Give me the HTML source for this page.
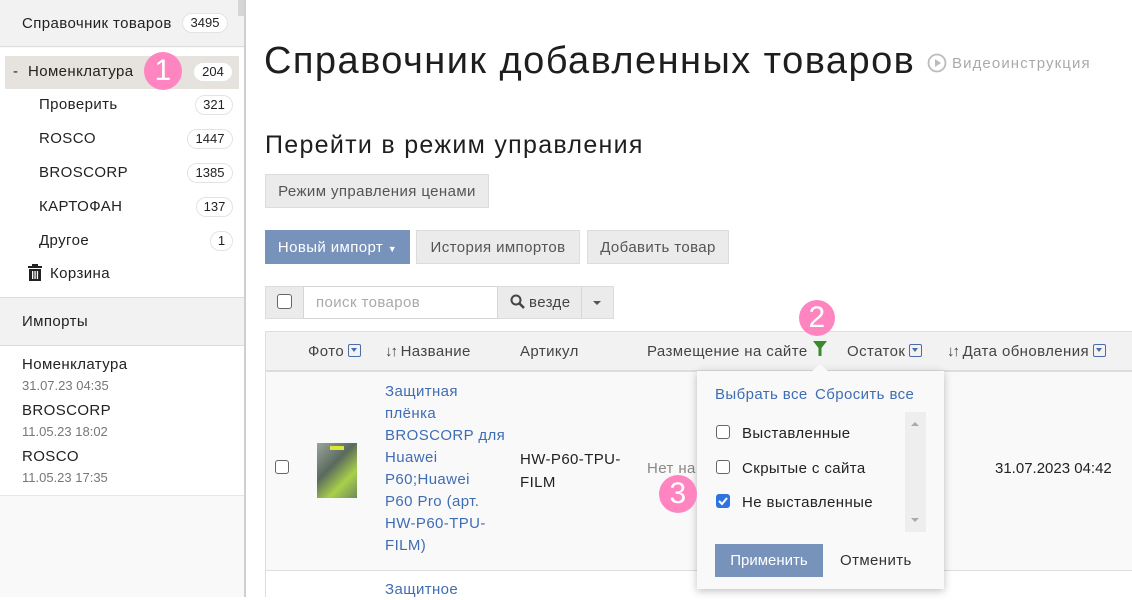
<!DOCTYPE html>
<html><head><meta charset="utf-8"><style>
*{box-sizing:border-box;margin:0;padding:0}
body{width:1132px;height:597px;overflow:hidden;background:#fff;font-family:"Liberation Sans",sans-serif;color:#222;position:relative;font-size:15px;letter-spacing:0.4px}
.a{position:absolute;white-space:nowrap;line-height:21px}
.badge{position:absolute;height:20px;border:1px solid #e3e3e3;border-radius:10px;background:#fff;font-size:13px;line-height:18px;text-align:center;color:#222;letter-spacing:0}
.pink{position:absolute;border-radius:50%;background:#ff85c0;color:#fff;text-align:center;font-size:30px}
.btn{position:absolute;background:#ebebeb;border:1px solid #dcdcdc;color:#555;font-size:15px;text-align:center}
.cb{position:absolute;width:14px;height:14px;border:1.5px solid #666;border-radius:3px;background:#fff}
.lnk{color:#3f6db3}
.sic{display:inline-block;width:13px;height:13px;border:1.5px solid #4a6da8;border-radius:2px;vertical-align:-1px;position:relative;margin-left:4px}
.sic:after{content:"";position:absolute;left:2px;top:3px;border-left:3px solid transparent;border-right:3px solid transparent;border-top:4px solid #4a6da8}
</style></head><body>
<!-- sidebar -->
<div class="a" style="left:0;top:0;width:246px;height:597px;background:#f9f9f9;border-right:2px solid #cfcfcf"></div>
<div class="a" style="left:0;top:0;width:244px;height:47px;background:#f2f2f2;border-bottom:1px solid #ddd"></div>
<div class="a" style="left:238px;top:0;width:6px;height:16px;background:#d6d6d6"></div>
<div class="a" style="left:22px;top:13px">Справочник товаров</div>
<div class="badge" style="left:182px;top:13px;width:46px">3495</div>
<div class="a" style="left:0;top:48px;width:244px;height:249px;background:#fff"></div>
<div class="a" style="left:5px;top:56px;width:234px;height:33px;background:#e6e3de"></div>
<div class="a" style="left:13px;top:61px">-</div>
<div class="a" style="left:28px;top:61px">Номенклатура</div>
<div class="badge" style="left:193px;top:62px;width:40px">204</div>
<div class="pink" style="left:144px;top:52px;width:38px;height:38px;line-height:38px">1</div>
<div class="a" style="left:39px;top:94px">Проверить</div><div class="badge" style="left:195px;top:95px;width:38px">321</div>
<div class="a" style="left:39px;top:128px">ROSCO</div><div class="badge" style="left:187px;top:129px;width:46px">1447</div>
<div class="a" style="left:39px;top:162px">BROSCORP</div><div class="badge" style="left:187px;top:163px;width:46px">1385</div>
<div class="a" style="left:39px;top:196px">КАРТОФАН</div><div class="badge" style="left:196px;top:197px;width:37px">137</div>
<div class="a" style="left:39px;top:230px">Другое</div><div class="badge" style="left:210px;top:231px;width:23px">1</div>
<svg class="a" style="left:28px;top:264px" width="14" height="17" viewBox="0 0 14 17"><rect x="0" y="2" width="14" height="2" fill="#222"/><rect x="4" y="0" width="6" height="2" fill="#222"/><rect x="1" y="5" width="12" height="12" fill="#222"/><rect x="4" y="7" width="1.3" height="8" fill="#fff"/><rect x="6.4" y="7" width="1.3" height="8" fill="#fff"/><rect x="8.8" y="7" width="1.3" height="8" fill="#fff"/></svg>
<div class="a" style="left:50px;top:263px">Корзина</div>
<div class="a" style="left:0;top:297px;width:244px;height:49px;background:#f2f2f2;border-top:1px solid #ddd;border-bottom:1px solid #ddd"></div>
<div class="a" style="left:22px;top:311px">Импорты</div>
<div class="a" style="left:0;top:346px;width:244px;height:150px;background:#fff;border-bottom:1px solid #e6e6e6"></div>
<div class="a" style="left:22px;top:354px">Номенклатура</div>
<div class="a" style="left:22px;top:375px;font-size:13px;color:#777;letter-spacing:0">31.07.23 04:35</div>
<div class="a" style="left:22px;top:400px">BROSCORP</div>
<div class="a" style="left:22px;top:421px;font-size:13px;color:#777;letter-spacing:0">11.05.23 18:02</div>
<div class="a" style="left:22px;top:446px">ROSCO</div>
<div class="a" style="left:22px;top:467px;font-size:13px;color:#777;letter-spacing:0">11.05.23 17:35</div>
<!-- main -->
<div class="a" style="left:264px;top:40px;font-size:38px;line-height:normal;letter-spacing:1.45px;color:#1e1e1e">Справочник добавленных товаров</div>
<svg class="a" style="left:927px;top:53px" width="20" height="20"><circle cx="10" cy="10" r="8.5" fill="none" stroke="#bbb" stroke-width="1.8"/><path d="M8 6 L14 10 L8 14Z" fill="#bbb"/></svg>
<div class="a" style="left:952px;top:53px;color:#aaa;font-size:15px;letter-spacing:1.1px">Видеоинструкция</div>
<div class="a" style="left:265px;top:131px;font-size:25px;line-height:normal;letter-spacing:1.3px;color:#1e1e1e">Перейти в режим управления</div>
<div class="btn" style="left:265px;top:174px;width:224px;height:34px;line-height:33px">Режим управления ценами</div>
<div class="btn" style="left:265px;top:230px;width:145px;height:34px;line-height:33px;background:#7792bb;border-color:#7792bb;color:#fff">Новый импорт <span style="font-size:9px">▼</span></div>
<div class="btn" style="left:416px;top:230px;width:164px;height:34px;line-height:33px">История импортов</div>
<div class="btn" style="left:587px;top:230px;width:142px;height:34px;line-height:33px">Добавить товар</div>
<div class="btn" style="left:265px;top:286px;width:349px;height:33px"></div>
<div class="cb" style="left:277px;top:294px;width:15px;height:15px"></div>
<div class="a" style="left:303px;top:286px;width:195px;height:33px;background:#fff;border:1px solid #d6d6d6;color:#aaa;padding:5px 0 0 12px">поиск товаров</div>
<svg class="a" style="left:510px;top:294px" width="15" height="15"><circle cx="6" cy="6" r="4.5" fill="none" stroke="#444" stroke-width="2"/><path d="M9.5 9.5 L14 14" stroke="#444" stroke-width="2.5"/></svg>
<div class="a" style="left:529px;top:292px;color:#444">везде</div>
<div class="a" style="left:581px;top:287px;width:1px;height:31px;background:#d6d6d6"></div>
<div class="a" style="left:593px;top:301px;border-left:4px solid transparent;border-right:4px solid transparent;border-top:4px solid #555"></div>
<!-- table -->
<div class="a" style="left:265px;top:331px;width:867px;height:41px;background:#f2f2f2;border-top:1px solid #ddd;border-bottom:2px solid #ddd;border-left:1px solid #ddd"></div>
<div class="a" style="left:308px;top:341px;color:#444">Фото<span class="sic"></span></div>
<div class="a" style="left:385px;top:341px;color:#444"><b style="letter-spacing:-2px">↓↑</b> Название</div>
<div class="a" style="left:520px;top:341px;color:#444">Артикул</div>
<div class="a" style="left:647px;top:341px;color:#444">Размещение на сайте</div>
<svg class="a" style="left:813px;top:341px" width="14" height="15"><path d="M0 0 H14 L8.5 7 V15 H5.5 V7Z" fill="#3b8a2a"/></svg>
<div class="a" style="left:847px;top:341px;color:#444">Остаток<span class="sic"></span></div>
<div class="a" style="left:947px;top:341px;color:#444"><b style="letter-spacing:-2px">↓↑</b> Дата обновления<span class="sic"></span></div>
<div class="a" style="left:265px;top:372px;width:867px;height:199px;background:#f9f9f9;border-left:1px solid #ddd;border-bottom:1px solid #ddd"></div>
<div class="a" style="left:265px;top:571px;width:1px;height:26px;background:#ddd"></div>
<div class="cb" style="left:275px;top:460px"></div>
<div class="a" style="left:317px;top:443px;width:40px;height:55px;background:linear-gradient(135deg,#9aa59d,#5a6a5e 40%,#a8d04a 70%,#6f8a5a)"></div>
<div class="a" style="left:330px;top:446px;width:14px;height:4px;background:#d8e83a"></div>
<div class="a lnk" style="left:385px;top:381px;line-height:22px;white-space:normal;width:125px">Защитная<br>плёнка<br>BROSCORP для<br>Huawei<br>P60;Huawei<br>P60 Pro (арт.<br>HW-P60-TPU-<br>FILM)</div>
<div class="a" style="left:520px;top:448px;line-height:23px">HW-P60-TPU-<br>FILM</div>
<div class="a" style="left:647px;top:458px;color:#888">Нет на</div>
<div class="a" style="left:995px;top:458px;letter-spacing:0">31.07.2023 04:42</div>
<div class="a lnk" style="left:385px;top:579px">Защитное</div>
<!-- dropdown -->
<div class="a" style="left:697px;top:371px;width:247px;height:218px;background:#f9f9f9;box-shadow:0 2px 8px rgba(0,0,0,.25)"></div>
<div class="a" style="left:811px;top:364px;border-left:9px solid transparent;border-right:9px solid transparent;border-bottom:8px solid #f9f9f9"></div>
<div class="a lnk" style="left:715px;top:384px">Выбрать все</div>
<div class="a lnk" style="left:815px;top:384px">Сбросить все</div>
<div class="a" style="left:905px;top:412px;width:21px;height:120px;background:#eee"></div>
<div class="a" style="left:911px;top:422px;border-left:4px solid transparent;border-right:4px solid transparent;border-bottom:4px solid #aaa"></div>
<div class="a" style="left:911px;top:518px;border-left:4px solid transparent;border-right:4px solid transparent;border-top:4px solid #aaa"></div>
<div class="cb" style="left:716px;top:425px"></div><div class="a" style="left:742px;top:423px">Выставленные</div>
<div class="cb" style="left:716px;top:460px"></div><div class="a" style="left:742px;top:458px">Скрытые с сайта</div>
<div class="a" style="left:716px;top:494px;width:14px;height:14px;background:#2f73e0;border-radius:3px"></div>
<svg class="a" style="left:716px;top:494px" width="14" height="14"><path d="M3 7 L6 10 L11 4" stroke="#fff" stroke-width="2" fill="none"/></svg>
<div class="a" style="left:742px;top:492px">Не выставленные</div>
<div class="btn" style="left:715px;top:544px;width:108px;height:33px;line-height:32px;background:#7792bb;border-color:#7792bb;color:#fff;letter-spacing:0">Применить</div>
<div class="a" style="left:840px;top:550px;color:#333">Отменить</div>
<div class="pink" style="left:799px;top:300px;width:36px;height:36px;line-height:36px">2</div>
<div class="pink" style="left:659px;top:475px;width:38px;height:38px;line-height:38px">3</div>
</body></html>
